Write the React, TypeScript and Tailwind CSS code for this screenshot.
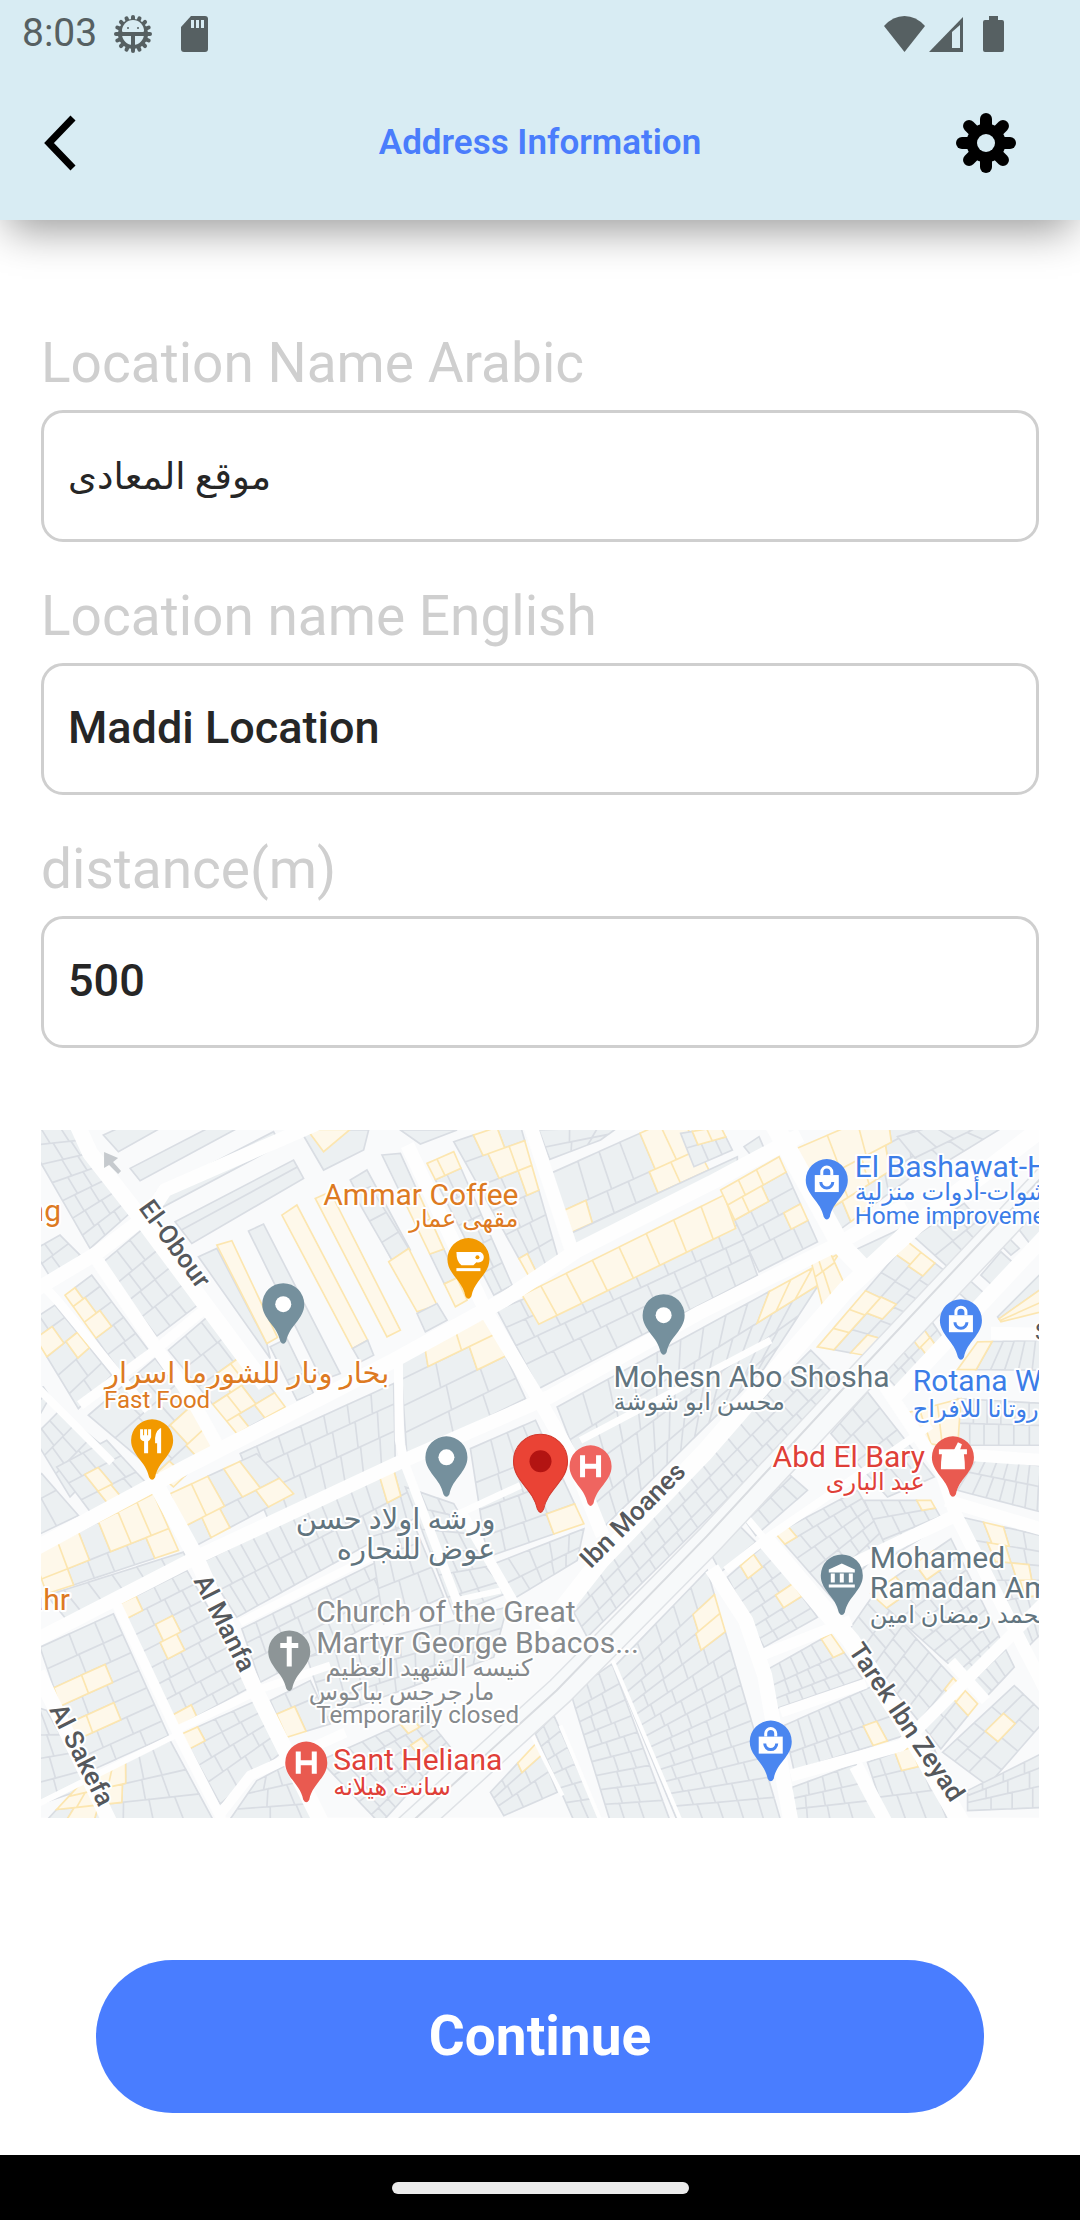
import React from "react";

type Lot = [number[], number, number, number[]?];

const clamp = (n: number) => Math.round(n * 10) / 10;

/** A city block: four corners, split into cols x rows lots. Warm lots are commercial. */
function Block({ lot, seed }: { lot: Lot; seed: number }) {
  const [q, cols, rows, warm = []] = lot;
  const at = (u: number, v: number) => {
    const x = (1 - v) * ((1 - u) * q[0] + u * q[2]) + v * ((1 - u) * q[6] + u * q[4]);
    const y = (1 - v) * ((1 - u) * q[1] + u * q[3]) + v * ((1 - u) * q[7] + u * q[5]);
    return `${clamp(x)},${clamp(y)}`;
  };
  const cut = (i: number, n: number, k: number) =>
    i === 0 ? 0 : i === n ? 1 : (i + Math.sin(i * 12.9 + k * 7.3 + seed) * 0.26) / n;
  const cold: string[] = [];
  const hot: string[] = [];
  for (let r = 0; r < rows; r++) {
    for (let c = 0; c < cols; c++) {
      const u0 = cut(c, cols, r);
      const u1 = cut(c + 1, cols, r);
      const v0 = cut(r, rows, 0);
      const v1 = cut(r + 1, rows, 0);
      const d = `M${at(u0, v0)}L${at(u1, v0)}L${at(u1, v1)}L${at(u0, v1)}Z`;
      (warm.includes(r * cols + c) ? hot : cold).push(d);
    }
  }
  return (
    <>
      <path d={cold.join("")} fill="#ecf0f2" stroke="#d9dde3" strokeWidth="5" />
      <path d={hot.join("")} fill="#fef8ea" stroke="#fce6b0" strokeWidth="5" />
    </>
  );
}

const tiles: { x: number; y: number; lots: Lot[] }[] = [
  {
    x: 40, y: 1120,
    lots: [
      [[-60, 20, 105, 20, 280, 270, 150, 385], 3, 7],
      [[190, 45, 420, -60, 440, -20, 235, 95], 2, 1],
      [[270, 145, 590, -20, 610, 15, 300, 182], 1, 1],
      [[350, 215, 700, 35, 720, 75, 370, 260], 1, 1],
      [[405, 305, 760, 120, 790, 175, 455, 370], 1, 2],
      [[780, 30, 985, 30, 970, 90, 850, 150], 1, 1],
      [[800, 28, 930, 28, 850, 95, 850, 95], 1, 1, [0]],
      [[625, 333, 670, 312, 900, 760, 845, 780], 1, 1],
      [[725, 285, 770, 255, 982, 660, 937, 685], 1, 1, [0]],
      [[937, 685, 982, 660, 1000, 705, 960, 725], 1, 1],
      [[825, 235, 870, 215, 1080, 630, 1040, 650], 1, 1, [0]],
      [[930, 180, 980, 150, 1110, 390, 1060, 430], 1, 1],
      [[475, 410, 530, 385, 680, 670, 690, 715], 1, 1],
      [[530, 375, 575, 362, 712, 652, 680, 670], 1, 1, [0]],
      [[690, 680, 740, 655, 820, 820, 770, 840], 1, 2],
      [[185, 430, 310, 325, 485, 545, 350, 648], 3, 4],
      [[-20, 390, 60, 345, 120, 405, 40, 485], 2, 2],
      [[75, 525, 155, 465, 325, 690, 240, 755], 2, 5, [0, 2, 4]],
      [[-40, 610, 45, 555, 215, 765, 115, 865], 2, 5, [2, 5]],
      [[385, 690, 520, 575, 735, 860, 590, 940], 3, 5, [7, 8, 9, 10, 12, 14]],
      [[145, 885, 345, 715, 540, 965, 400, 1100], 3, 4, [8, 11, 9]],
      [[-50, 820, 10, 800, 30, 830, -10, 900], 1, 2],
      [[-20, 950, 60, 870, 215, 1000, 90, 1130], 3, 3],
      [[600, 1000, 1060, 790, 1065, 1035, 690, 1210], 7, 3, [7]],
    ],
  },
  {
    x: 370, y: 1120,
    lots: [
      [[90, 30, 260, 30, 150, 72, 150, 72], 1, 1],
      [[35, 105, 90, 100, 290, 540, 255, 560], 1, 5, [1, 2, 4]],
      [[-50, 220, 0, 200, 115, 385, 65, 420], 1, 3],
      [[55, 425, 115, 385, 200, 555, 140, 575], 1, 1, [0]],
      [[140, 580, 200, 550, 230, 600, 165, 635], 1, 1],
      [[170, 130, 250, 95, 425, 495, 370, 525], 2, 6, [0, 1]],
      [[250, 65, 445, 0, 562, 410, 475, 468], 3, 6, [1, 4, 5, 8, 15]],
      [[505, 30, 745, 20, 690, 60, 538, 118], 3, 2],
      [[540, 160, 930, -15, 1015, 150, 585, 345], 6, 2, [4, 5, 6, 10, 11]],
      [[600, 340, 1100, 110, 1100, 150, 618, 388], 1, 1],
      [[380, 570, 1090, 270, 1160, 465, 505, 805], 9, 4],
      [[455, 525, 1060, 225, 1095, 325, 505, 612], 8, 1, [0, 1, 2, 3, 4, 5, 6, 7]],
      [[90, 715, 350, 590, 465, 835, 110, 1010], 3, 4, [1, 2, 5]],
      [[560, 860, 1405, 400, 1180, 745, 700, 1220], 12, 4, [10, 9, 11]],
      [[300, 985, 495, 900, 640, 1210, 350, 1310], 4, 4, [15]],
    ],
  },
  {
    x: 700, y: 1120,
    lots: [
      [[-60, 40, 60, 20, 95, 90, -20, 140], 3, 2, [1, 2]],
      [[130, 80, 175, 50, 190, 85, 150, 105], 1, 1],
      [[265, 95, 720, -100, 700, 120, 395, 345], 5, 3, [0, 1, 2, 5, 6, 7, 11]],
      [[590, 50, 900, -40, 1040, -60, 680, 160], 6, 2],
      [[60, 210, 235, 110, 350, 365, 175, 455], 3, 5, [0, 1, 2, 3, 4, 11]],
      [[330, 420, 385, 390, 430, 490, 365, 555], 2, 2, [0, 1, 2, 3]],
      [[440, 400, 595, 328, 475, 445, 475, 445], 1, 1],
      [[350, 680, 620, 365, 735, 455, 490, 705], 6, 3, [0, 1, 2, 5, 8, 11, 12]],
      [[640, 350, 790, 250, 860, 330, 740, 440], 3, 2],
      [[840, 465, 900, 395, 950, 440, 890, 510], 1, 1],
      [[890, 365, 915, 345, 955, 385, 930, 405], 1, 1],
      [[940, 310, 1030, 250, 1030, 330, 990, 375], 1, 1],
      [[765, 510, 800, 475, 850, 520, 820, 560], 1, 1],
      [[540, 750, 690, 600, 730, 660, 590, 805], 5, 2, [3, 8]],
      [[890, 590, 1040, 440, 1040, 570, 900, 605], 1, 3, [1, 2]],
      [[830, 665, 1040, 660, 1040, 750, 770, 748], 6, 1, [0]],
      [[770, 835, 1040, 850, 1040, 975, 770, 975], 6, 2],
      [[610, 880, 780, 835, 770, 985, 660, 965], 3, 1, [0, 1, 2]],
      [[390, 940, 500, 815, 700, 1070, 560, 1130], 3, 4],
      [[830, 1010, 1040, 1040, 1040, 1180, 770, 1110], 7, 2],
      [[-405, 1430, 330, 690, 430, 790, -340, 1550], 18, 3],
    ],
  },
  {
    x: 40, y: 1470,
    lots: [
      [[-60, 50, 5, 10, 115, 135, -20, 200], 2, 2],
      [[50, -10, 200, -90, 325, 45, 155, 130], 4, 3, [5, 9]],
      [[-20, 255, 340, 70, 415, 240, 20, 370], 6, 2, [0, 1, 3, 4, 5, 6, 11]],
      [[390, 70, 650, -50, 760, 70, 450, 235], 5, 2, [0, 1, 3, 6, 9]],
      [[485, 275, 1090, -20, 1130, 140, 590, 440], 15, 2, [13]],
      [[605, 475, 1080, 240, 1150, 380, 660, 635], 9, 3],
      [[20, 375, 430, 245, 450, 290, 90, 460], 6, 1],
      [[240, 400, 440, 300, 640, 645, 400, 775], 4, 8, [0, 9, 13, 28]],
      [[0, 530, 220, 430, 385, 795, 130, 910], 3, 7, [6, 7, 12, 13]],
      [[-40, 700, 20, 720, 150, 950, 0, 1000], 2, 4],
      [[130, 930, 390, 810, 520, 1050, 10, 1060], 6, 3, [0, 1, 2, 6, 7, 8, 13]],
      [[425, 790, 650, 690, 730, 840, 540, 1000], 4, 4, [0]],
      [[690, 690, 810, 630, 870, 760, 740, 800], 2, 2, [2]],
      [[650, 930, 745, 880, 870, 1060, 560, 1060], 3, 3],
      [[840, 870, 1150, 730, 1230, 830, 1020, 1060], 8, 5, [6, 22]],
      [[800, 560, 1400, 410, 1360, 560, 860, 740], 9, 3],
    ],
  },
  {
    x: 370, y: 1470,
    lots: [
      [[0, 200, 130, 160, 220, 380, 40, 460], 3, 3],
      [[105, 50, 250, 100, 405, 370, 250, 430], 3, 6],
      [[345, 290, 640, 175, 620, 270, 430, 385], 5, 2],
      [[730, 590, 1010, 300, 1230, 1050, 920, 1050], 5, 13, [9, 14]],
      [[600, 665, 725, 580, 900, 1055, 720, 1055], 3, 9],
      [[495, 790, 550, 735, 690, 1050, 610, 1050], 2, 6],
      [[360, 965, 500, 815, 560, 965, 400, 1035], 3, 3, [2]],
    ],
  },
  {
    x: 700, y: 1470,
    lots: [
      [[25, 240, 110, 160, 165, 215, 60, 305], 1, 1],
      [[115, 125, 240, -10, 320, 60, 165, 195], 4, 2],
      [[80, 320, 190, 225, 350, 440, 190, 530], 3, 6, [1, 11]],
      [[195, 600, 390, 490, 485, 625, 225, 715], 6, 3, [5]],
      [[250, 765, 520, 645, 610, 795, 280, 900], 8, 2, [14]],
      [[275, 950, 465, 880, 530, 1055, 270, 1055], 4, 3],
      [[500, 875, 690, 810, 790, 1055, 560, 1055], 4, 3, [2]],
      [[225, 190, 470, 60, 560, 215, 400, 390], 5, 5, [0]],
      [[490, 90, 690, 90, 730, 160, 570, 260], 4, 3, [3]],
      [[440, 485, 520, 370, 830, 700, 720, 835], 3, 8, [20, 23]],
      [[510, 370, 750, 205, 940, 590, 855, 680], 4, 9, [0, 2]],
      [[780, 140, 1040, 200, 1040, 470, 975, 535], 4, 6, [1, 5, 10, 14]],
      [[725, 845, 940, 645, 1040, 740, 860, 945], 4, 3, [6]],
      [[800, 960, 1040, 840, 1040, 1010, 800, 1020], 4, 3],
    ],
  },
];

/** Streets as [points, width] in map units. */
const streets: [string, number][] = [
  ["M75 1120L90 1153 140 1217 207 1307 265 1385", 16],
  ["M35 1290L97 1253 150 1213 165 1190 325 1120", 14],
  ["M97 1260L153 1343 190 1396 220 1450", 13],
  ["M40 1282L57 1300 122 1379 148 1410", 9],
  ["M80 1405L155 1350 207 1307", 10],
  ["M35 1385L60 1410 112 1462", 8],
  ["M35 1548L187 1466 390 1362 503 1300 577 1250 710 1183 800 1135", 15],
  ["M35 1640L194 1558 397 1463 548 1397 700 1312 833 1246 905 1205", 14],
  ["M156 1484L195 1555 253 1685 325 1830", 16],
  ["M117 1605L175 1728 222 1820", 10],
  ["M240 1622L380 1552", 8],
  ["M175 1730L262 1688 330 1665", 8],
  ["M38 1672L110 1822", 15],
  ["M35 1805L175 1735", 6],
  ["M398 1360L399 1440 405 1465 460 1610", 9],
  ["M528 1120L572 1253", 14],
  ["M407 1145L485 1310 536 1395 570 1455 602 1535", 14],
  ["M455 1515L520 1485", 7],
  ["M455 1600L500 1590", 6],
  ["M460 1510L515 1605", 10],
  ["M218 1816L250 1775 345 1732", 10],
  ["M772 1122L840 1245 862 1268", 19],
  ["M545 1630L600 1560 703 1453 845 1290 915 1225 1045 1125", 18],
  ["M580 1440L770 1340", 7],
  ["M711 1568L745 1620 764 1675 790 1820", 15],
  ["M765 1540L850 1640 905 1725 960 1822", 18],
  ["M765 1540L740 1510", 7],
  ["M760 1655L850 1620", 11],
  ["M780 1712L865 1683", 10],
  ["M790 1775L900 1745 1045 1600", 12],
  ["M855 1765L885 1822", 14],
  ["M725 1570L770 1535 930 1425", 8],
  ["M850 1565L955 1515 940 1470 880 1380", 13],
  ["M945 1500L1045 1530", 13],
  ["M955 1515L1045 1690", 13],
  ["M950 1661L985 1700", 11],
  ["M895 1395L1045 1235", 15],
  ["M990 1333L1045 1334", 13],
  ["M930 1452L1045 1460", 12],
  ["M612 1660L680 1820", 4],
  ["M560 1725L600 1820", 4],
  ["M532 1735L562 1795", 4],
];

const pinShape =
  "M-21 0A21 21 0 1 1 21 0C21 15 6 21 3 37Q0 42-3 37C-6 21-21 15-21 0Z";

const Dot = <circle r="8" fill="#fff" />;
const Letter = <path d="M-8-11V11M8-11V11M-8 0H8" stroke="#fff" strokeWidth="5" fill="none" />;
const Bag = (
  <g>
    <path d="M-12-5H12V12H-12Z" fill="#fff" />
    <path d="M-5-5V-8A5 5 0 0 1 5-8V-5" fill="none" stroke="#fff" strokeWidth="3" />
    <path d="M-6 2A6 6 0 0 0 6 2" fill="none" stroke="#4a86f0" strokeWidth="3" />
  </g>
);
const Cup = (
  <g fill="#fff">
    <path d="M-12-7H12A5 5 0 0 1 8 3L5 6H-7Q-12 3-12-7Z" />
    <path d="M-12 9H12V12H-12Z" />
    <circle cx="9" cy="-2" r="2" fill="#f29900" />
  </g>
);
const Fork = (
  <g fill="#fff">
    <path d="M-12-11H-9V-5H-8V-11H-5V-5H-4V-11H-1V-3Q-2 0-4 1V13H-8V1Q-12 0-12-3Z" />
    <path d="M8-12Q2-8 3 3H5V13H9V-12Z" />
  </g>
);
const Mortar = (
  <g fill="#fff">
    <path d="M-14-8H14V-3H11Q12 4 12 12H-12Q-12 4-11-3H-14Z" />
    <path d="M1-7L5-15 9-13 7-7Z" />
  </g>
);
const Museum = (
  <g fill="#fff">
    <path d="M0-12L13-6V-3H-13V-6Z" />
    <path d="M-11-2H-7V7H-11ZM-2-2H2V7H-2ZM7-2H11V7H7ZM-13 9H13V12H-13Z" />
  </g>
);
const Cross = <path d="M0-15V15M-9-6H9" stroke="#fff" strokeWidth="5" fill="none" />;

const pins: [number, number, string, React.ReactNode][] = [
  [283, 1304, "#75909d", Dot],
  [446, 1457, "#75909d", Dot],
  [663, 1315, "#75909d", Dot],
  [468, 1259, "#f29900", Cup],
  [152, 1440, "#f29900", Fork],
  [826, 1180, "#4a86f0", Bag],
  [960, 1320, "#4a86f0", Bag],
  [770, 1741, "#4a86f0", Bag],
  [952, 1457, "#e95a50", Mortar],
  [590, 1466, "#ef6560", Letter],
  [306, 1762, "#e95a50", Letter],
  [841, 1575, "#6d8896", Museum],
  [289, 1651, "#8d9597", Cross],
];

type Label = { t: string; x: number; y: number; s: 30 | 29 | 26 | 24; c: string; end?: boolean; r?: number };
const ORANGE = "#dd7a22";
const BLUE = "#3b7de8";
const SLATE = "#61747e";
const GREY = "#85898c";
const RED = "#df4038";
const ROAD = "#55585c";

const labels: Label[] = [
  { t: "Ammar Coffee", x: 518, y: 1205, s: 30, c: ORANGE, end: true },
  { t: "مقهى عمار", x: 518, y: 1227, s: 24, c: ORANGE, end: true },
  { t: "ng", x: 61, y: 1221, s: 30, c: ORANGE, end: true },
  { t: "ahr", x: 70, y: 1610, s: 30, c: ORANGE, end: true },
  { t: "بخار ونار للشورما اسرار", x: 389, y: 1383, s: 29, c: ORANGE, end: true },
  { t: "Fast Food", x: 104, y: 1408, s: 24, c: ORANGE },
  { t: "El Bashawat-Home", x: 854, y: 1177, s: 30, c: BLUE },
  { t: "شوات-أدوات منزلية", x: 854, y: 1200, s: 24, c: BLUE },
  { t: "Home improvement", x: 854, y: 1224, s: 24, c: BLUE },
  { t: "Rotana Wedding", x: 912, y: 1391, s: 30, c: BLUE },
  { t: "قاعة روتانا للافراح", x: 912, y: 1417, s: 24, c: BLUE },
  { t: "Mohesn Abo Shosha", x: 613, y: 1387, s: 30, c: SLATE },
  { t: "محسن ابو شوشة", x: 613, y: 1410, s: 24, c: SLATE },
  { t: "Abd El Bary", x: 924, y: 1467, s: 30, c: RED, end: true },
  { t: "عبد البارى", x: 924, y: 1490, s: 24, c: RED, end: true },
  { t: "ورشه اولاد حسن", x: 495, y: 1529, s: 29, c: SLATE, end: true },
  { t: "عوض للنجاره", x: 495, y: 1559, s: 29, c: SLATE, end: true },
  { t: "Church of the Great", x: 316, y: 1622, s: 30, c: GREY },
  { t: "Martyr George Bbacos...", x: 316, y: 1652, s: 30, c: GREY },
  { t: "كنيسه الشهيد العظيم", x: 532, y: 1675, s: 24, c: GREY, end: true },
  { t: "مارجرجس بباكوس", x: 494, y: 1699, s: 24, c: GREY, end: true },
  { t: "Temporarily closed", x: 316, y: 1722, s: 24, c: GREY },
  { t: "Sant Heliana", x: 333, y: 1769, s: 30, c: RED },
  { t: "سانت هيلانه", x: 333, y: 1794, s: 24, c: RED },
  { t: "Mohamed", x: 869, y: 1568, s: 30, c: SLATE },
  { t: "Ramadan Amin", x: 869, y: 1598, s: 30, c: SLATE },
  { t: "محمد رمضان امين", x: 869, y: 1623, s: 24, c: SLATE },
  { t: "Sh", x: 1034, y: 1340, s: 24, c: ROAD },
  { t: "El-Obour", x: 138, y: 1208, s: 26, c: ROAD, r: 54 },
  { t: "Al Manfa", x: 193, y: 1580, s: 26, c: ROAD, r: 63 },
  { t: "Al Sakefa", x: 49, y: 1709, s: 26, c: ROAD, r: 63 },
  { t: "Ibn Moanes", x: 590, y: 1569, s: 26, c: ROAD, r: -45 },
  { t: "Tarek Ibn Zeyad", x: 847, y: 1650, s: 26, c: ROAD, r: 56 },
];

const sizes = { 30: "text-[30px]", 29: "text-[29px]", 26: "text-[26px]", 24: "text-[24px]" };

function LocationMap() {
  return (
    <svg viewBox="41 1130 997 687" className="block w-full" role="img" aria-label="Map of the location">
      <rect x="41" y="1130" width="997" height="687" fill="#f9fafb" />
      {tiles.map((tile, i) => (
        <g key={i} transform={`translate(${tile.x} ${tile.y}) scale(0.3333)`}>
          {tile.lots.map((lot, j) => (
            <Block key={j} lot={lot} seed={i * 31 + j} />
          ))}
        </g>
      ))}
      <g fill="none" stroke="#fefefe" strokeLinejoin="round">
        {streets.map(([d, w], i) => (
          <path key={i} d={d} strokeWidth={w} />
        ))}
      </g>
      <g fill="none" strokeLinejoin="round">
        <path d="M395 1840L560 1690 710 1538 867 1370 1060 1165" stroke="#dfe2e6" strokeWidth="30" />
        <path d="M395 1840L560 1690 710 1538 867 1370 1060 1165" stroke="#f7f9fa" strokeWidth="27" />
        <path d="M395 1836L556 1690 706 1536 863 1366 1056 1161" stroke="#d9dce0" strokeWidth="2" />
      </g>
      <path d="M104 1152L118 1158 113 1162 121 1171 118 1174 109 1165 104 1168Z" fill="#c6cace" />
      {pins.map(([x, y, fill, mark], i) => (
        <g key={i} transform={`translate(${x} ${y})`}>
          <path d={pinShape} fill={fill} />
          {mark}
        </g>
      ))}
      <g transform="translate(540 1461)">
        <path
          d="M-27 0A27 27 0 1 1 27 0C27 20 8 26 3 48Q0 54-3 48C-8 26-27 20-27 0Z"
          fill="#ea4335"
          stroke="#d2372b"
        />
        <circle r="11" fill="#b31412" />
      </g>
      {labels.map((l) => (
        <text
          key={l.t}
          x={l.x}
          y={l.y}
          textAnchor={l.end ? "end" : "start"}
          fill={l.c}
          stroke="#ffffff"
          strokeWidth="4"
          strokeLinejoin="round"
          paintOrder="stroke"
          transform={l.r ? `rotate(${l.r} ${l.x} ${l.y})` : undefined}
          className={sizes[l.s] + (l.r ? " font-medium" : "")}
        >
          {l.t}
        </text>
      ))}
    </svg>
  );
}

function DebugIcon() {
  const teeth = Array.from({ length: 16 }, (_, i) => i * 22.5);
  return (
    <svg viewBox="-20 -20 40 40" className="size-10">
      {teeth.map((a) => (
        <path key={a} d="M0-14V-17" stroke="#566062" strokeWidth="4" strokeLinecap="round" transform={`rotate(${a})`} />
      ))}
      <circle r="13" fill="none" stroke="#566062" strokeWidth="4" />
      <path d="M-11-3A11 11 0 0 1 11-3Z" fill="#d8ecf3" />
      <path d="M-13 0H13M0 0V13" stroke="#566062" strokeWidth="4" />
      <circle cx="-5" cy="-6" r="1" fill="#566062" />
      <circle cx="5" cy="-6" r="1" fill="#566062" />
    </svg>
  );
}

function SettingsIcon() {
  return (
    <svg viewBox="-30 -30 60 60" className="size-[60px]">
      {[0, 45, 90, 135].map((a) => (
        <path key={a} d="M0-24V24" stroke="#000" strokeWidth="12" strokeLinecap="round" transform={`rotate(${a})`} />
      ))}
      <circle r="14" fill="none" stroke="#000" strokeWidth="11" />
      <circle r="9" fill="#d8ecf3" />
    </svg>
  );
}

function Field({ id, label, value, dir }: { id: string; label: string; value: string; dir?: "rtl" }) {
  return (
    <div className="flex flex-col">
      <label htmlFor={id} className="mb-[10px] text-[55px] leading-[74px] text-[#cfcfcf]">
        {label}
      </label>
      <input
        id={id}
        defaultValue={value}
        dir={dir}
        className={
          "h-[132px] w-full rounded-[22px] border-[3px] border-[#cfcfcf] bg-white px-6 text-left text-[#262626] outline-none " +
          (dir ? "text-[37px] font-normal" : "pb-1 text-[45px] font-medium")
        }
      />
    </div>
  );
}

export default function App() {
  return (
    <div className="flex min-h-screen flex-col bg-white font-[Roboto,'DejaVu_Sans',sans-serif]">
      <header className="bg-[#d8ecf3] pb-[37px] shadow-[0_18px_40px_-8px_rgba(0,0,0,0.4)]">
        <div className="flex h-[67px] items-center justify-between pr-[76px] pl-[22px] text-[#566062]">
          <div className="flex items-center">
            <span className="mr-4 text-[39px] leading-none">8:03</span>
            <DebugIcon />
            <svg viewBox="0 0 27 36" className="ml-7 h-9 w-[27px]" fill="currentColor">
              <path d="M10 0H24Q27 0 27 3V33Q27 36 24 36H3Q0 36 0 33V11Z" />
              <path d="M10 4H13V12H10ZM15 4H18V12H15ZM20 4H23V12H20Z" fill="#d8ecf3" />
            </svg>
          </div>
          <div className="flex items-center">
            <svg viewBox="0 0 41 36" className="h-9 w-[41px]" fill="currentColor">
              <path d="M0 10Q9 0 20.500 0T41 10L20.500 36Z" />
            </svg>
            <svg viewBox="0 0 34 36" className="ml-1 h-9 w-[34px]" fill="currentColor">
              <path d="M0 36L34 1V36Z" />
              <path d="M23 16L31 9V32H23Z" fill="#d8ecf3" />
            </svg>
            <svg viewBox="0 0 21 36" className="ml-5 h-9 w-[21px]" fill="currentColor">
              <path d="M6 0H15V4H19Q21 4 21 6V34Q21 36 19 36H2Q0 36 0 34V6Q0 4 2 4H6Z" />
            </svg>
          </div>
        </div>
        <div className="flex h-[116px] items-center pt-9 pr-16 pl-11">
          <button type="button" aria-label="Back" className="flex flex-1 justify-start">
            <svg viewBox="0 0 32 56" className="h-14 w-8">
              <path d="M29 3L5 28 29 53" fill="none" stroke="#000" strokeWidth="7" />
            </svg>
          </button>
          <h1 className="pl-5 text-[35px] leading-[48px] font-semibold text-[#4a7dfc]">Address Information</h1>
          <div className="flex flex-1 justify-end">
            <button type="button" aria-label="Settings">
              <SettingsIcon />
            </button>
          </div>
        </div>
      </header>

      <main className="flex flex-1 flex-col px-[41px] pt-[106px] pb-[42px]">
        <form className="flex flex-1 flex-col">
          <div className="flex flex-col gap-[37px]">
            <Field id="name-ar" label="Location Name Arabic" value="موقع المعادى" dir="rtl" />
            <Field id="name-en" label="Location name English" value="Maddi Location" />
            <Field id="distance" label="distance(m)" value="500" />
          </div>
          <div className="mt-[82px] mb-[142px] overflow-hidden">
            <LocationMap />
          </div>
          <button
            type="button"
            className="mx-[55px] mt-auto h-[153px] rounded-full bg-[#497dff] text-[55px] font-bold text-white"
          >
            Continue
          </button>
        </form>
      </main>

      <footer className="flex h-[66px] items-center justify-center bg-black">
        <div className="h-3 w-[297px] rounded-full bg-[#ebebeb]" />
      </footer>
    </div>
  );
}
